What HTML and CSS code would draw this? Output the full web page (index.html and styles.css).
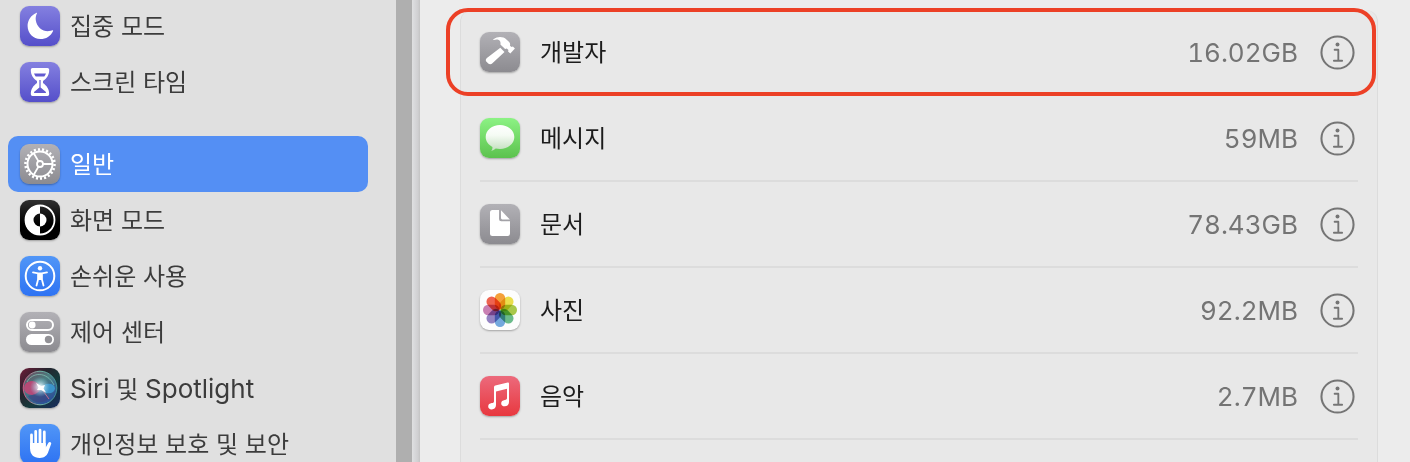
FILE: index.html
```html
<!doctype html>
<html lang="ko">

<head>
  <meta charset="UTF-8">
  <meta name="viewport" content="width=device-width, initial-scale=1">
  <title>일반</title>
  <link rel="stylesheet" href="styles.css">
</head>

<body>

  <nav class="sidebar">
    <div class="menu">
      <ul class="group">
        <li><a href="#focus" class="item">
          <svg class="icon indigo" viewBox="0 0 40 40"><path fill="#fff" d="M17 7.200C15.800 9.500 15.500 11.800 15.800 14.200C16.700 21 22.500 25.600 29 25.100C30.200 25 31.400 24.700 32.500 24.200C33 24 33.300 24.300 33.100 24.900C30.800 30 26 33 20.400 33C13.200 33 7.600 27.300 7.600 20.100C7.600 14 11 9.200 16.200 6.900C16.800 6.600 17.200 6.700 17 7.200Z"/></svg>
          <span class="label">집중 모드</span></a></li>
        <li><a href="#screentime" class="item">
          <svg class="icon indigo" viewBox="0 0 40 40">
            <path fill="#fff" d="M12.500 6h15q1.700 0 1.700 1.700c0 5.500-2.500 8.500-6.200 11.300v2c3.700 2.800 6.200 5.800 6.200 11.300q0 1.700-1.700 1.700h-15q-1.700 0-1.700-1.700c0-5.500 2.500-8.500 6.200-11.300v-2c-3.700-2.800-6.200-5.800-6.200-11.300q0-1.700 1.700-1.700z"/>
            <path fill="#625ad0" d="M14 11.500h12q-.6 1.600-1.700 2.900h-8.600q-1.100-1.300-1.700-2.900zM19.400 18h1.200v7.500l5.400 4.500q.5 1-.8 1h-10.400q-1.300 0-.8-1l5.400-4.500z"/>
          </svg>
          <span class="label">스크린 타임</span></a></li>
      </ul>
      <ul class="group">
        <li><a href="#general" class="item active" aria-current="page">
          <svg class="icon gray" viewBox="0 0 40 40" fill="none" stroke="#fff">
            <circle cx="20" cy="20" r="12.500" stroke-width="2"/>
            <circle cx="20" cy="20" r="14.500" stroke-width="2.600" pathLength="88" stroke-dasharray="2 2"/>
            <circle cx="20" cy="20" r="3" stroke-width="1.800"/>
            <path stroke-width="1.800" d="M23 20h9.500M18.500 17.400l-4.750-8.200M18.500 22.600l-4.750 8.200"/>
          </svg>
          <span class="label">일반</span></a></li>
        <li><a href="#appearance" class="item">
          <svg class="icon black" viewBox="0 0 40 40">
            <circle cx="20" cy="20" r="14.500" fill="none" stroke="#fff" stroke-width="1.800"/>
            <path fill="#fff" d="M20 5a15 15 0 0 0 0 30v-8.500a6.500 6.500 0 0 1 0-13z"/>
            <path fill="#fff" d="M20 13.500a6.500 6.500 0 0 1 0 13z"/>
          </svg>
          <span class="label">화면 모드</span></a></li>
        <li><a href="#accessibility" class="item">
          <svg class="icon blue" viewBox="0 0 40 40">
            <circle cx="20" cy="20" r="14.300" fill="none" stroke="#fff" stroke-width="2"/>
            <circle cx="20" cy="12.200" r="2.200" fill="#fff"/>
            <path fill="none" stroke="#fff" stroke-width="1.800" stroke-linecap="round" stroke-linejoin="round" d="M13 16.300l5.200 1h3.600l5.200-1M18.200 17.500v5.500l-1.700 6.500M21.800 17.500v5.500l1.700 6.500"/>
            <path fill="#fff" d="M17.500 17h5v6.500l-2 .5h-1l-2-.5z"/>
          </svg>
          <span class="label">손쉬운 사용</span></a></li>
        <li><a href="#control" class="item">
          <svg class="icon gray" viewBox="0 0 40 40">
            <rect x="7" y="8" width="26" height="10" rx="5" fill="none" stroke="#fff" stroke-width="2"/>
            <circle cx="12.200" cy="13" r="3.400" fill="#fff"/>
            <rect x="6" y="22" width="28" height="11" rx="5.500" fill="#fff"/>
            <circle cx="28.500" cy="27.500" r="3.700" fill="#929196"/>
          </svg>
          <span class="label">제어 센터</span></a></li>
        <li><a href="#siri" class="item">
          <svg class="icon siri" viewBox="0 0 40 40">
            <defs>
              <radialGradient id="glow"><stop offset="0" stop-color="#fff"/><stop offset=".25" stop-color="#e4faff" stop-opacity=".75"/><stop offset="1" stop-color="#7fd0e8" stop-opacity="0"/></radialGradient>
              <linearGradient id="orb" x1="0" y1="0" x2=".6" y2="1"><stop offset="0" stop-color="#6d4458"/><stop offset=".45" stop-color="#4b7d80"/><stop offset="1" stop-color="#2b4f98"/></linearGradient>
              <linearGradient id="rim" x1="0" y1="0" x2="1" y2="0"><stop offset="0" stop-color="#d45784"/><stop offset=".5" stop-color="#74b7a8"/><stop offset="1" stop-color="#3e8f96"/></linearGradient>
            </defs>
            <circle cx="20" cy="20" r="16.800" fill="url(#orb)" stroke="url(#rim)" stroke-width="1"/>
            <ellipse cx="12" cy="20" rx="8" ry="7" fill="#d83c74" opacity=".75"/>
            <ellipse cx="28.500" cy="20.500" rx="6.500" ry="4.800" fill="#3d9fd8" opacity=".8"/>
            <path fill="#3a3f80" opacity=".6" d="M8 28c6-1 10-3 13-7c2 5 5 8 9 9c-6 6-17 6-22-2z"/>
            <path fill="none" stroke="#8fd8c4" stroke-width="1" opacity=".6" d="M7 14c5-10 20-11 27 3"/>
            <path fill="none" stroke="#e0708c" stroke-width="1" opacity=".8" d="M21 20l8 11"/>
            <circle cx="20" cy="19" r="10" fill="url(#glow)"/>
            <path fill="#fff" d="M16 15l5 3 4-1-1.500 3.500 2.500 4-5-2.500-4 0 1.500-2.500z"/>
          </svg>
          <span class="label"><span class="latin">Siri</span> 및 <span class="latin">Spotlight</span></span></a></li>
        <li><a href="#privacy" class="item">
          <svg class="icon blue" viewBox="0 0 40 40">
            <path fill="none" stroke="#fff" stroke-width="2.800" stroke-linecap="round" d="M11.500 11v13M15.700 7.500v14M20 6.200v15M24.300 8v15"/>
            <path fill="#fff" d="M10.100 19h15.600v4.500l2.700-4.800c.8-1.500 3.200-.8 2.800 1l-2.700 7.600c-1.200 4-4 6.700-8.700 6.700c-6.200 0-9.700-3.800-9.700-9.500z"/>
          </svg>
          <span class="label">개인정보 보호 및 보안</span></a></li>
      </ul>
    </div>
    <div class="scrollbar"></div>
  </nav>

  <main class="content">
    <ul class="card">
      <li class="row marked">
        <svg class="icon gray" viewBox="0 0 40 40">
          <path fill="#fff" d="M20.300 15.800l4.200 4.200L12.400 31.300c-1.300 1.200-2.900 1.200-4.200.1l-1.400-1.300c-1.400-1.300-1.300-3 .1-4.200z"/>
          <path fill="#fff" d="M13.600 7.300C17.500 4.300 23 4.400 26.400 7.400l2.500 2.400c1.200 1.200 1.400 2.300 1.100 3.900l1.500 1.200 1.400-.4 2 2.100-4.600 5-2.200-2 .3-1.700-1.600-1.300-1.700.5-4.700-4.600c.4-2.200-.1-3.700-1.700-4.500-1.400-.6-3-.5-5 .1-.7.100-.8-.4-.1-.8z"/>
        </svg>
        <span class="name label">개발자</span>
        <span class="size label">16.02GB</span>
        <button class="info" type="button" aria-label="개발자 정보"><svg viewBox="0 0 34 34"><use href="#i"/></svg></button>
      </li>
      <li class="row">
        <svg class="icon green" viewBox="0 0 40 40">
          <defs><linearGradient id="bubble" x1="0" y1="0" x2="0" y2="1"><stop offset="0" stop-color="#fff"/><stop offset=".4" stop-color="#f5fbf4"/><stop offset="1" stop-color="#c3dfbe"/></linearGradient></defs>
          <path fill="url(#bubble)" d="M20 7c8 0 14.300 5.400 14.300 12S28 31 20 31c-1.500 0-3-.2-4.300-.5c-1.200 1.200-2.800 2-4.500 2.200c1-1 1.400-2.200 1.200-3.800C8.400 26.800 5.700 23.200 5.700 19C5.700 12.400 12 7 20 7z"/>
        </svg>
        <span class="name label">메시지</span>
        <span class="size label">59MB</span>
        <button class="info" type="button" aria-label="메시지 정보"><svg viewBox="0 0 34 34"><use href="#i"/></svg></button>
      </li>
      <li class="row">
        <svg class="icon gray" viewBox="0 0 40 40">
          <path fill="#fff" d="M12.500 6H19v9q0 2.300 2.300 2.300H30V29.500q0 2.500-2.500 2.500h-15q-2.500 0-2.500-2.500v-21Q10 6 12.500 6z"/>
          <path fill="#fff" d="M21 6.200l8.800 9.200h-7.500q-1.300 0-1.300-1.300z"/>
        </svg>
        <span class="name label">문서</span>
        <span class="size label">78.43GB</span>
        <button class="info" type="button" aria-label="문서 정보"><svg viewBox="0 0 34 34"><use href="#i"/></svg></button>
      </li>
      <li class="row">
        <svg class="icon white petals" viewBox="0 0 40 40">
          <defs><rect id="petal" x="14.800" y="3" width="10.400" height="16.500" rx="5.200"/></defs>
          <use href="#petal" fill="#f6a13a"/>
          <use href="#petal" fill="#ece04c" transform="rotate(45 20 20)"/>
          <use href="#petal" fill="#aaca4a" transform="rotate(90 20 20)"/>
          <use href="#petal" fill="#6bbd8b" transform="rotate(135 20 20)"/>
          <use href="#petal" fill="#74a9df" transform="rotate(180 20 20)"/>
          <use href="#petal" fill="#9584c4" transform="rotate(225 20 20)"/>
          <use href="#petal" fill="#ca80b4" transform="rotate(270 20 20)"/>
          <use href="#petal" fill="#f06450" transform="rotate(315 20 20)"/>
        </svg>
        <span class="name label">사진</span>
        <span class="size label">92.2MB</span>
        <button class="info" type="button" aria-label="사진 정보"><svg viewBox="0 0 34 34"><use href="#i"/></svg></button>
      </li>
      <li class="row">
        <svg class="icon red" viewBox="0 0 40 40">
          <path fill="#fff" d="M14 11.200q0-1.300 1.300-1.600L27.700 6.600Q29 6.300 29 7.600V26c0 2.700-1.800 4.300-4.300 4.300c-2.200 0-3.500-1.200-3.500-2.900c0-2 1.400-3 3.600-3.400c1.700-.3 2.200-.8 2.200-2.200V12.800L16 15.500V29c0 2.800-1.700 4.400-4.300 4.400c-2.200 0-3.500-1.200-3.500-2.900c0-2 1.400-3 3.600-3.400c1.700-.3 2.200-.8 2.200-2.200z"/>
        </svg>
        <span class="name label">음악</span>
        <span class="size label">2.7MB</span>
        <button class="info" type="button" aria-label="음악 정보"><svg viewBox="0 0 34 34"><use href="#i"/></svg></button>
      </li>
    </ul>
  </main>

  <svg class="symbols" aria-hidden="true">
    <symbol id="i" viewBox="0 0 34 34">
      <circle cx="17" cy="17" r="15.600" fill="none" stroke="#757575" stroke-width="2"/>
      <circle cx="17" cy="9.300" r="1.900" fill="#757575"/>
      <path fill="none" stroke="#757575" stroke-width="1.800" stroke-linecap="round" stroke-linejoin="round" d="M14.200 14.300h3.600v10.700M13.500 25h8"/>
    </symbol>
  </svg>

</body>

</html>
```
FILE: styles.css
```css
* {
  margin: 0;
  padding: 0;
  box-sizing: border-box;
}

body {
  display: flex;
  height: 100vh;
  overflow: hidden;
  background: #ececec;
  font-family: Inter, "Noto Sans CJK KR", sans-serif;
  font-size: 24px;
  line-height: 32px;
}

ul {
  list-style: none;
}

/* 사이드바 */
.sidebar {
  display: flex;
  flex: none;
  width: 420px;
  padding-right: 8px;
  overflow: hidden;
  background: linear-gradient(to right, #e0e0e0 412px, #dcdddf 413px, #cfcfd1 418px, #c4c4c4 420px);
}

.menu {
  flex: 1;
  padding: 0 28px 0 8px;
  margin-top: -2px;
}

.group {
  margin-bottom: 26px;
}

.item {
  display: flex;
  align-items: center;
  gap: 10px;
  height: 56px;
  padding: 0 12px;
  border-radius: 10px;
  color: #3c3c3c;
  text-decoration: none;
  white-space: nowrap;
}

.active {
  background: #548ff4;
  color: #fff;
}

.label {
  padding-top: 2px;
}

.latin {
  font-size: 26px;
}

.scrollbar {
  width: 16px;
  background: #afafaf;
}

/* 아이콘 */
.icon {
  flex: none;
  width: 40px;
  height: 40px;
  border-radius: 9px;
  box-shadow: 0 1px 2px rgba(0, 0, 0, .3);
}

.indigo {
  background: linear-gradient(#8480e0, #554fca);
}

.gray {
  background: linear-gradient(#b2b1b6, #8c8b90);
}

.black {
  background: linear-gradient(#303030, #000 60%);
}

.blue {
  background: linear-gradient(#5196f7, #2e73f3);
}

.green {
  background: linear-gradient(#8cf284, #5cc24e);
}

.white {
  background: #fdfdfd;
}

.red {
  background: linear-gradient(#ec6a7c, #e8383f);
}

.siri {
  background: linear-gradient(to bottom right, #701c38, #26242e 35%, #15393b 60%, #182a5c);
}

.petals use {
  mix-blend-mode: multiply;
}

/* 저장 공간 목록 */
.content {
  display: flex;
  flex: 1;
  padding: 10px 32px 0 40px;
}

.card {
  flex: 1;
  padding: 0 19px;
  border: 1px solid #dcdcdc;
  border-width: 0 1px;
  border-radius: 12px 12px 0 0;
  background: #e8e8e8;
}

.row {
  position: relative;
  display: flex;
  align-items: center;
  height: 86px;
  border-bottom: 2px solid #dcdcdc;
}

.marked::after {
  content: "";
  position: absolute;
  inset: -2px -18px -2px -34px;
  border: 4px solid #ec4026;
  border-radius: 22px;
  pointer-events: none;
}

.name {
  flex: 1;
  margin-left: 20px;
  color: #1c1c1c;
}

.size {
  color: #747474;
  font-size: 26px;
  font-variant-numeric: tabular-nums;
}

.info {
  width: 35px;
  height: 35px;
  margin: 0 3px 0 22px;
  border: 0;
  background: none;
  cursor: pointer;
}

.info svg {
  display: block;
}

.symbols {
  position: absolute;
  width: 0;
  height: 0;
}
```
